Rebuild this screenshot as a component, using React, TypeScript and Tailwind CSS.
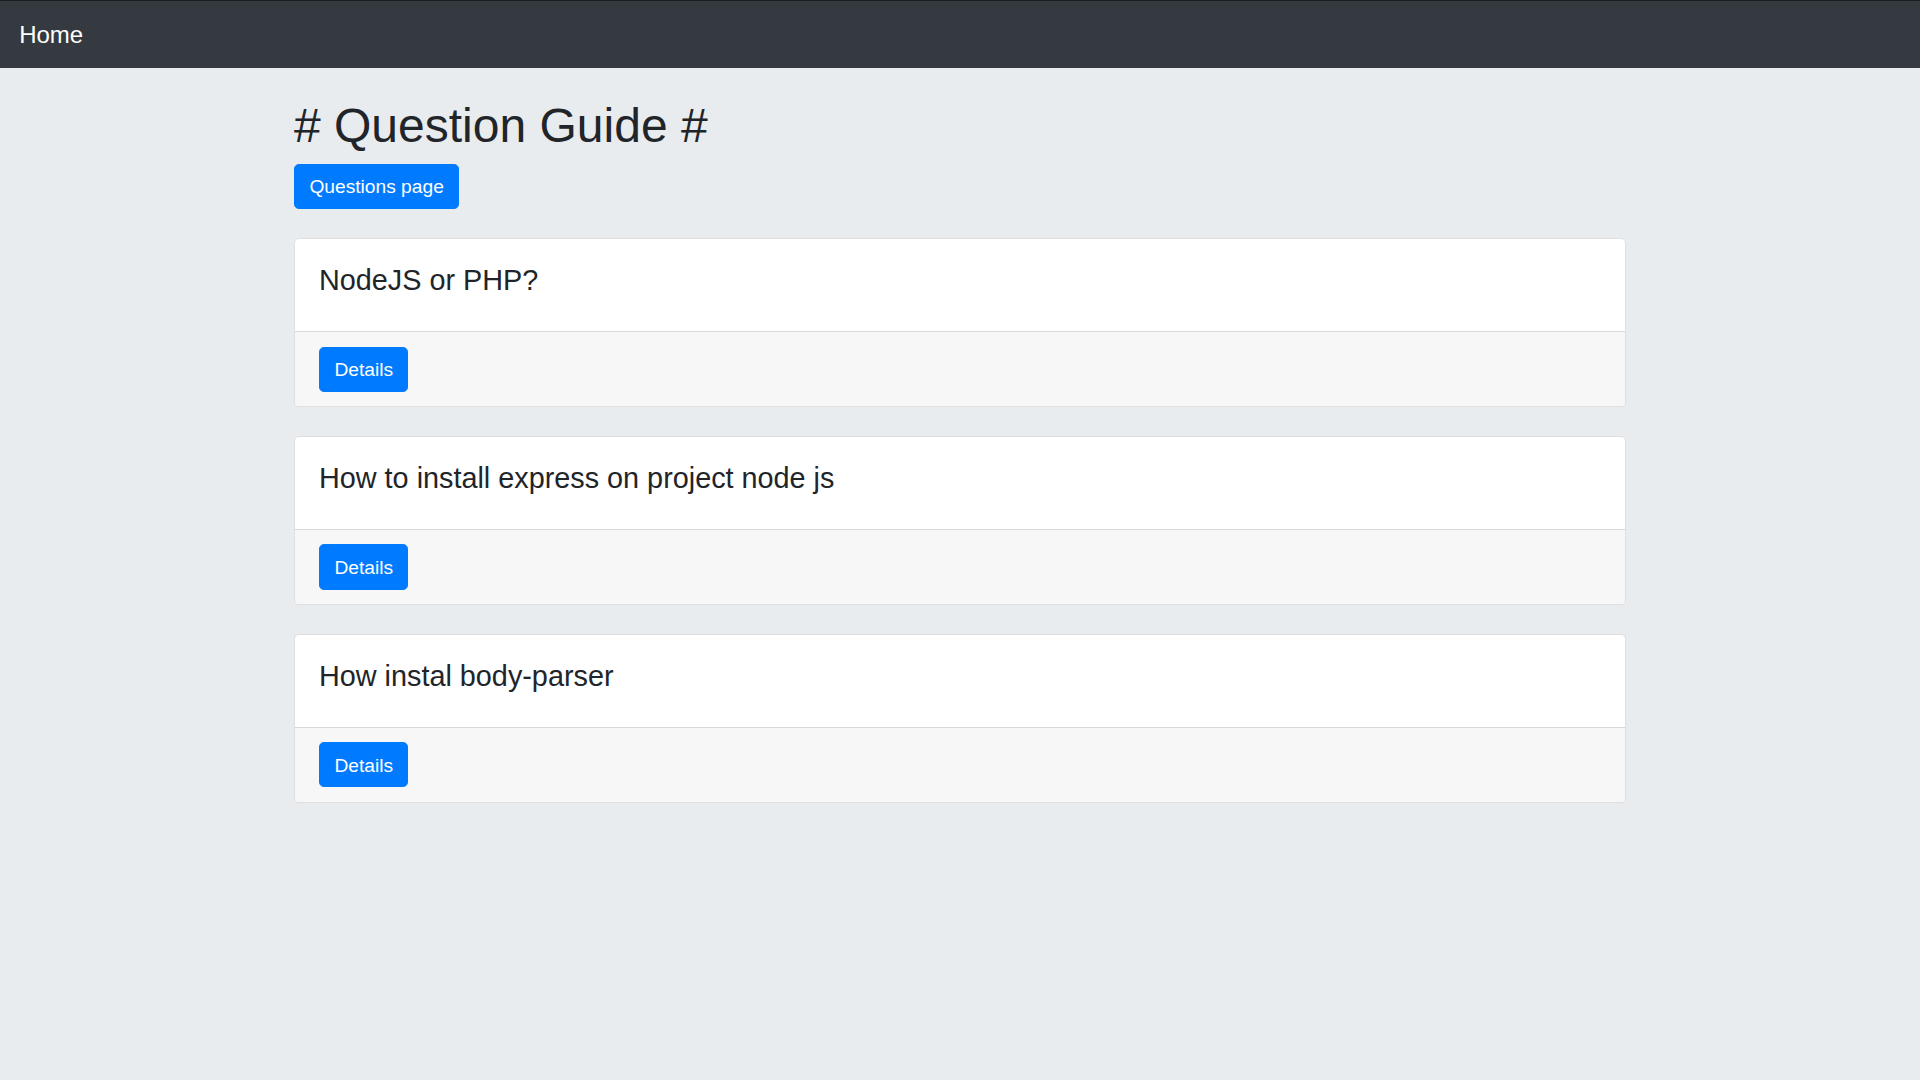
const questions = [
    { id: 1, title: 'NodeJS or PHP?' },
    { id: 2, title: 'How to install express on project node js' },
    { id: 3, title: 'How instal body-parser' },
];

const btn =
    'inline-block rounded-[4.8px] border border-[#007bff] bg-[#007bff] px-[14.4px] pt-[8.2px] pb-[6.2px] text-[19.2px] leading-[28.8px] text-white';

const App = () => {
    return (
        <div className="min-h-screen bg-[#e9ecef] font-['Liberation_Sans',Arial,sans-serif] text-[#212529]">
            {/* Navbar */}
            <nav className="flex h-[68px] items-center border-t border-[#1b1e21] bg-[#343a40] px-[19.2px]">
                <a href="#" className="text-[24px] leading-[36px] text-white">
                    Home
                </a>
            </nav>

            <div className="mx-auto w-[1368px] px-[18px]">
                <h1 className="mt-[28.8px] mb-[9.6px] text-[48px] leading-[57.6px] font-normal">
                    # Question Guide #
                </h1>
                <a href="#" className={btn}>
                    Questions page
                </a>

                <div className="mt-[28.8px] flex flex-col gap-[28.8px]">
                    {questions.map((q) => (
                        <div
                            key={q.id}
                            className="overflow-hidden rounded-[4.8px] border border-black/[0.125] bg-white"
                        >
                            <div className="p-[24px]">
                                <h4 className="mb-[9.6px] text-[28.8px] leading-[34.56px] font-normal">
                                    {q.title}
                                </h4>
                            </div>
                            <div className="border-t border-black/[0.125] bg-black/[0.03] px-[24px] py-[14.4px]">
                                <a href="#" className={btn}>
                                    Details
                                </a>
                            </div>
                        </div>
                    ))}
                </div>
            </div>
        </div>
    );
};

export default App;
